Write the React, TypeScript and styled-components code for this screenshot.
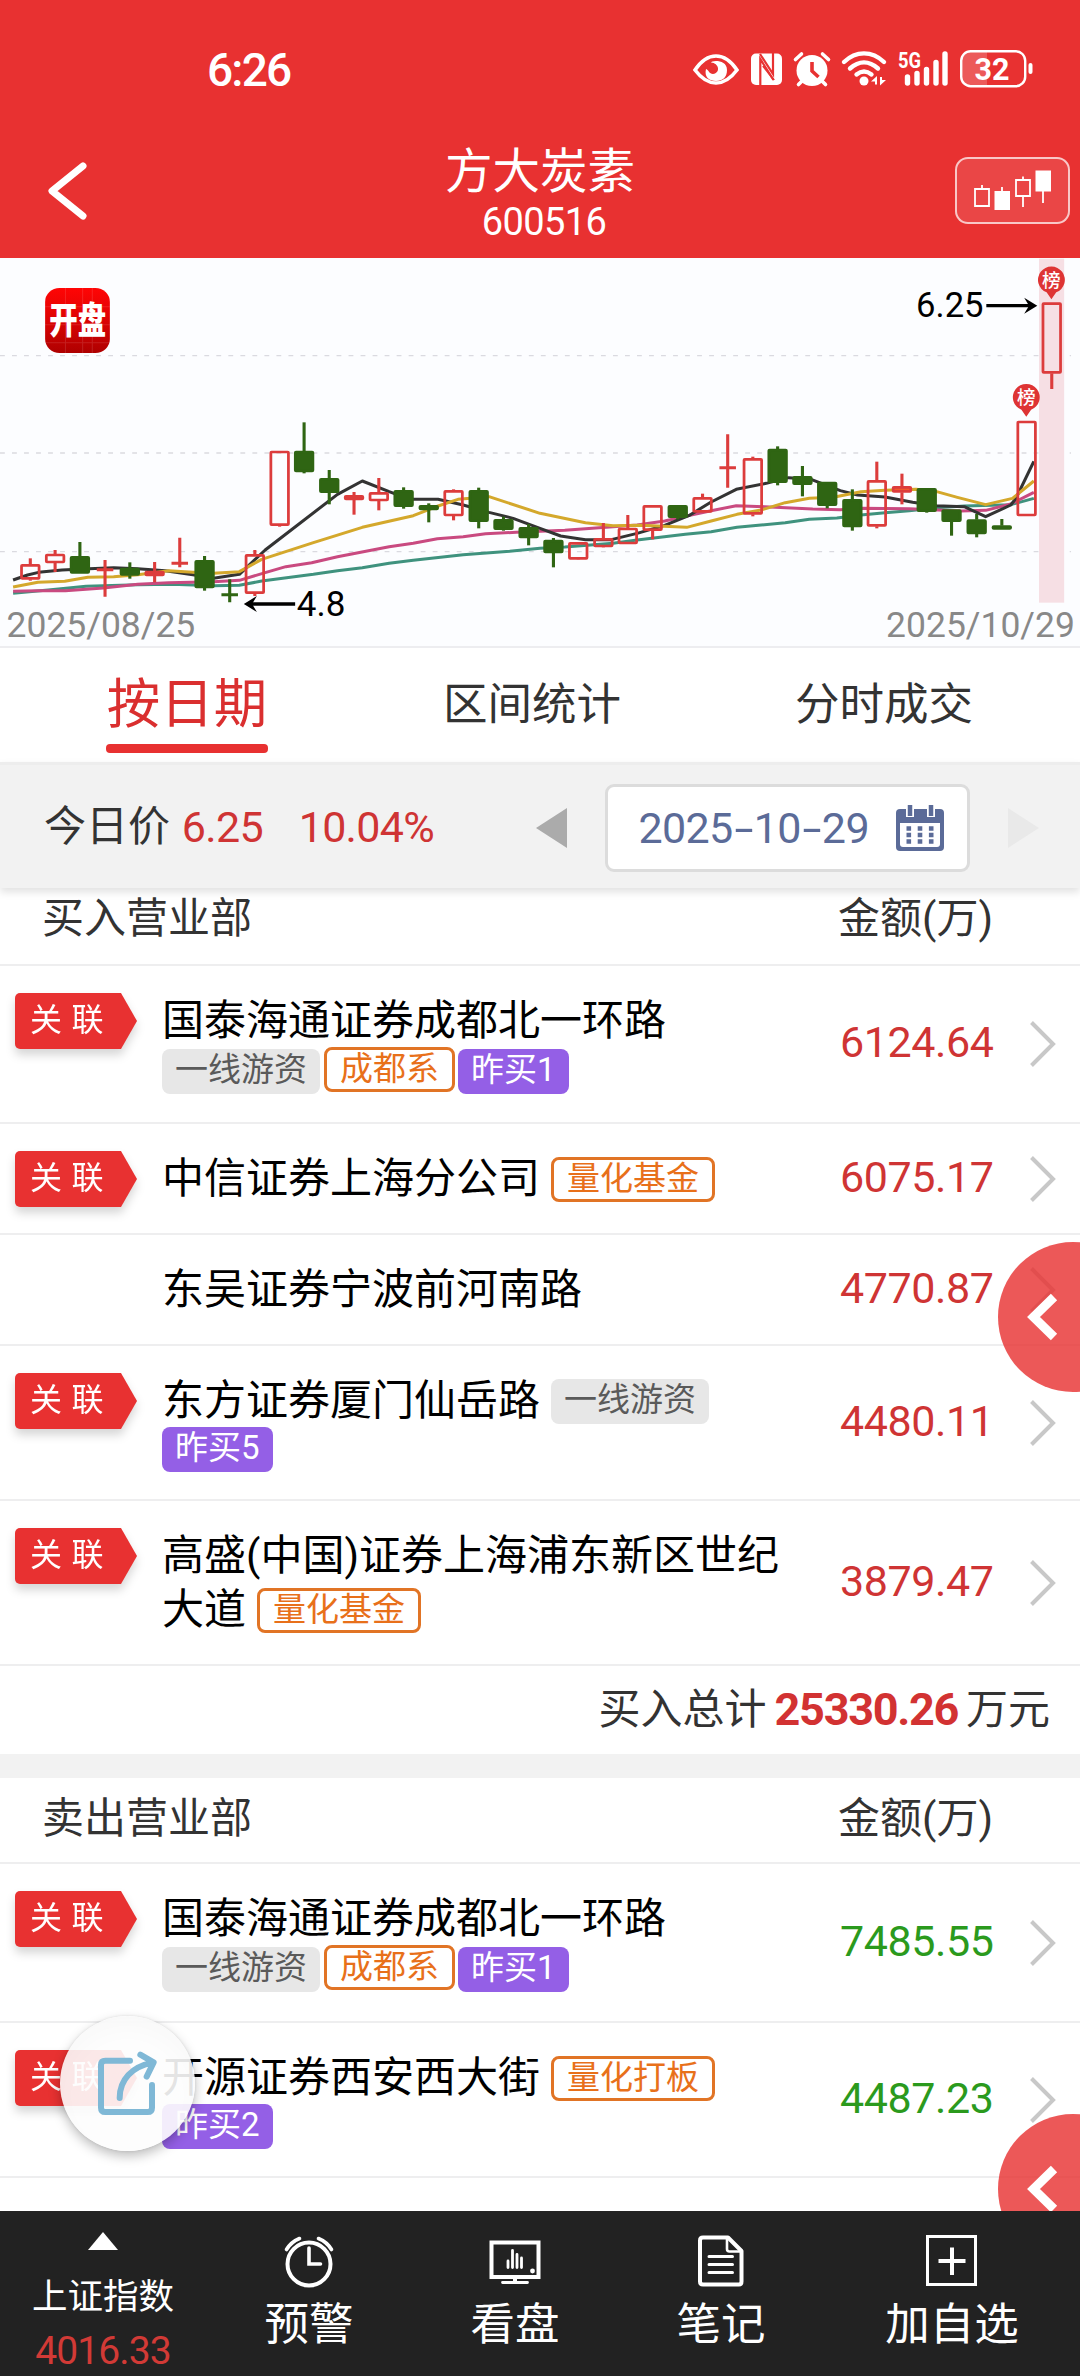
import React from "react";
import styled, { createGlobalStyle, css } from "styled-components";

const FONT = `Roboto, "Noto Sans CJK SC", sans-serif`;

const GlobalStyle = createGlobalStyle`
  html, body { margin: 0; padding: 0; background: #fff; }
  * { box-sizing: border-box; }
`;

const Screen = styled.div`
  position: relative;
  width: 1080px;
  height: 2376px;
  overflow: hidden;
  display: flex;
  flex-direction: column;
  background: #fff;
  font-family: ${FONT};
  color: #333;
`;

/* ---------- header ---------- */

const Header = styled.header`
  height: 258px;
  flex: none;
  background: #e83131;
  color: #fff;
`;

const StatusBar = styled.div`
  height: 138px;
  display: flex;
  align-items: center;
  justify-content: space-between;
  padding: 1px 45px 0 207px;

  svg { margin-top: -3px; }
`;

const Clock = styled.span`
  font-size: 46px;
  font-weight: 500;
  line-height: 50px;
  letter-spacing: -1.8px;
`;

const NavBar = styled.div`
  height: 120px;
  display: flex;
  align-items: flex-start;
  justify-content: space-between;
`;

const NavSide = styled.div<{ $end?: boolean }>`
  width: 300px;
  height: 120px;
  display: flex;
  align-items: flex-start;
  justify-content: ${(p) => (p.$end ? "flex-end" : "flex-start")};
  padding: ${(p) => (p.$end ? "19px 10px 0 0" : "22px 0 0 44px")};
`;

const Heading = styled.div`
  display: flex;
  flex-direction: column;
  align-items: center;
  padding-top: 6px;
`;

const StockName = styled.h1`
  margin: 0;
  font-size: 47.5px;
  font-weight: 400;
  line-height: 56px;
`;

const StockCode = styled.div`
  font-size: 38px;
  line-height: 45px;
  letter-spacing: -0.6px;
  padding-left: 8px;
`;

const KlineButton = styled.button`
  width: 115px;
  height: 67px;
  padding: 0;
  border: 2px solid rgba(255, 255, 255, 0.7);
  border-radius: 13px;
  background: rgba(255, 255, 255, 0.1);
  display: flex;
`;

/* ---------- chart ---------- */

const ChartPanel = styled.section`
  height: 390px;
  flex: none;
  background: #fcfdff;
  border-bottom: 2px solid #ededf0;
`;

/* ---------- tabs ---------- */

const Tabs = styled.nav`
  height: 114px;
  flex: none;
  display: flex;
  gap: 176px;
  padding-left: 106px;
`;

const Tab = styled.div<{ $active?: boolean }>`
  position: relative;
  height: 105px;
  width: ${(p) => (p.$active ? 162 : 176)}px;
  display: flex;
  justify-content: center;
  font-size: ${(p) => (p.$active ? 53.5 : 44.5)}px;
  line-height: 114px;
  white-space: nowrap;
  color: ${(p) => (p.$active ? "#da2f2f" : "#333")};
  ${(p) =>
    p.$active &&
    css`
      &::after {
        content: "";
        position: absolute;
        left: 0;
        right: 0;
        bottom: 0;
        height: 9px;
        border-radius: 4px;
        background: #e83131;
      }
    `}
`;

/* ---------- price / date bar ---------- */

const PriceBar = styled.div`
  height: 126px;
  flex: none;
  z-index: 1;
  display: flex;
  align-items: center;
  padding: 0 40px 0 44px;
  background: #f2f2f2;
  border-top: 3px solid #ededed;
  box-shadow: 0 4px 8px rgba(0, 0, 0, 0.12);
`;

const PriceLabel = styled.span`
  font-size: 42px;
  line-height: 60px;
  width: 138px;
`;

const PriceValue = styled.span<{ $w: number }>`
  width: ${(p) => p.$w}px;
  font-size: 43px;
  line-height: 60px;
  letter-spacing: -0.7px;
  color: #cf3434;
`;

const Arrow = styled.svg`
  width: 32px;
  height: 42px;
  margin-top: 3px;
  flex: none;
`;

const DateBox = styled.div`
  width: 365px;
  height: 88px;
  margin: 2px 38px 0 37px;
  border: 3px solid #dcdcdc;
  border-radius: 9px;
  background: #fff;
  display: flex;
  align-items: center;
  justify-content: space-between;
  padding: 0 23px 0 30px;
`;

const DateText = styled.span`
  font-size: 43px;
  line-height: 60px;
  letter-spacing: -0.6px;
  color: #5b6b98;
  white-space: nowrap;
`;

const Dash = styled.span`
  display: inline-block;
  width: 21px;
  text-align: center;
  transform: scaleX(1.6);
`;

/* ---------- lists ---------- */

const ListHead = styled.div<{ $h: number; $pt: number }>`
  height: ${(p) => p.$h}px;
  padding: ${(p) => p.$pt}px 87px 0 42px;
  flex: none;
  display: flex;
  justify-content: space-between;
  font-size: 42px;
  line-height: 60px;
  border-bottom: 2px solid #eeeeef;
`;

const RowBox = styled.div<{ $h: number }>`
  height: ${(p) => p.$h}px;
  flex: none;
  display: flex;
  border-bottom: 2px solid #eeeeef;
`;

const BadgeCell = styled.div`
  width: 162px;
  padding: 27px 0 0 15px;
`;

const Badge = styled.div`
  width: 122px;
  height: 56px;
  filter: drop-shadow(0 6px 5px rgba(0, 0, 0, 0.16));
`;

const BadgeShape = styled.div`
  width: 122px;
  height: 56px;
  padding-left: 15px;
  border-radius: 5px 0 0 5px;
  background: #e83131;
  clip-path: polygon(0 0, 106px 0, 122px 28px, 106px 56px, 0 56px);
  color: #fff;
  font-size: 32px;
  line-height: 54px;
  white-space: pre;
  word-spacing: 1.5px;
`;

const NameCell = styled.div`
  width: 678px;
  padding-top: 28px;
`;

const NameLine = styled.div<{ $lineHeight: number }>`
  height: ${(p) => p.$lineHeight}px;
  display: flex;
  align-items: center;
  font-size: 42px;
  line-height: 54px;
  color: #000;
  white-space: nowrap;
`;

type TagKind = "gray" | "orange" | "purple";

const Tag = styled.span<{ $kind: TagKind; $ml: number; $up?: boolean }>`
  height: 45px;
  margin-left: ${(p) => p.$ml}px;
  padding: 0 13px;
  border-radius: 8px;
  font-size: 33px;
  line-height: 42px;
  ${(p) =>
    p.$kind === "gray" && css`background: #e7e7e7; color: #5a5a5a;`}
  ${(p) =>
    p.$kind === "purple" && css`background: #945fe6; color: #fff;`}
  ${(p) =>
    p.$kind === "orange" &&
    css`border: 3px solid #e17425; color: #e8701a; background: #fff; line-height: 38px;`}
  ${(p) => p.$up && css`margin-top: -4px;`}
`;

const Amount = styled.div<{ $sell?: boolean }>`
  width: 190px;
  display: flex;
  align-items: center;
  padding-bottom: 4px;
  font-size: 43px;
  letter-spacing: -0.4px;
  color: ${(p) => (p.$sell ? "#2b9a1d" : "#cf3434")};
`;

const ChevronCell = styled.svg`
  align-self: center;
  width: 26px;
  height: 46px;
`;

const TotalRow = styled.div`
  height: 88px;
  flex: none;
  display: flex;
  justify-content: flex-end;
  align-items: center;
  gap: 8px;
  padding: 0 30px 0 0;
  font-size: 42px;
  line-height: 60px;
`;

const TotalValue = styled.b`
  font-size: 45px;
  font-weight: 700;
  letter-spacing: -1.3px;
  color: #d23232;
`;

const Separator = styled.div`
  height: 24px;
  flex: none;
  background: #f2f2f2;
`;

/* ---------- floating controls ---------- */

const SideHandle = styled.button<{ $top: number }>`
  position: absolute;
  left: 998px;
  top: ${(p) => p.$top}px;
  width: 150px;
  height: 150px;
  padding: 0;
  border: 0;
  border-radius: 50%;
  background: rgba(232, 49, 49, 0.81);
  display: flex;
`;

const ShareButton = styled.button`
  position: absolute;
  left: 60px;
  top: 2016px;
  width: 135px;
  height: 135px;
  padding: 0;
  border: 0;
  border-radius: 50%;
  background: rgba(253, 253, 253, 0.9);
  box-shadow: 0 5px 12px rgba(0, 0, 0, 0.26), 0 0 3px rgba(0, 0, 0, 0.1),
    inset 0 12px 24px rgba(0, 0, 0, 0.02);
  display: flex;
`;

/* ---------- bottom bar ---------- */

const BottomSlot = styled.div`
  flex: 1;
`;

const BottomBar = styled.footer`
  height: 165px;
  flex: none;
  z-index: 2;
  display: flex;
  background: #222;
  color: #fff;
`;

const BottomItem = styled.div<{ $w: number }>`
  width: ${(p) => p.$w}px;
  display: flex;
  flex-direction: column;
  align-items: center;
  padding-top: 22px;
  font-size: 44.5px;
  line-height: 60px;
  svg { width: 56px; height: 56px; margin-bottom: 6px; }
`;

const IndexItem = styled(BottomItem)`
  padding-top: 20px;
  font-size: 35.5px;
  line-height: 50px;
  svg { width: 30px; height: 20px; margin-bottom: 21px; }
`;

const IndexValue = styled.span`
  font-size: 39px;
  line-height: 50px;
  margin-top: 4px;
  letter-spacing: -0.9px;
  color: #d23a36;
`;

/* ---------- data ---------- */

interface Candle {
  x: number;
  o: number;
  c: number;
  hi: number;
  lo: number;
  up?: boolean;
  fill?: string;
}

const R = (x: number, o: number, c: number, hi: number, lo: number, fill?: string): Candle => ({ x, o, c, hi, lo, up: true, fill });
const G = (x: number, o: number, c: number, hi: number, lo: number): Candle => ({ x, o, c, hi, lo });

const CANDLES: Candle[] = [
  R(88, 943, 988, 925, 992),
  R(160, 912, 939, 900, 966),
  G(232, 919, 970, 876, 970),
  R(305, 959, 959, 930, 1040),
  G(377, 954, 976, 937, 986),
  R(449, 963, 978, 936, 997, "#e03a3a"),
  R(522, 940, 940, 863, 952),
  G(594, 931, 1014, 918, 1022),
  G(667, 1034, 1034, 988, 1057),
  R(740, 913, 1031, 900, 1038),
  R(812, 603, 827, 603, 830),
  G(883, 603, 666, 517, 670),
  G(956, 685, 728, 660, 763),
  R(1028, 736, 750, 726, 794, "#e03a3a"),
  R(1100, 727, 753, 684, 781),
  G(1172, 721, 770, 712, 776),
  G(1245, 766, 780, 760, 817),
  R(1317, 721, 798, 718, 811),
  G(1390, 721, 815, 713, 835),
  G(1462, 808, 839, 800, 842),
  G(1535, 832, 864, 822, 886),
  G(1607, 870, 909, 864, 952),
  R(1679, 877, 928, 877, 929),
  R(1752, 865, 891, 819, 892),
  R(1823, 834, 882, 795, 880),
  R(1895, 766, 842, 766, 868),
  G(1968, 766, 803, 766, 808),
  R(2040, 742, 787, 731, 787),
  R(2113, 653, 653, 553, 713),
  R(2186, 625, 793, 620, 799),
  G(2258, 597, 698, 589, 706),
  G(2330, 679, 704, 648, 739),
  G(2402, 696, 767, 696, 775),
  G(2475, 748, 831, 718, 842),
  R(2546, 691, 829, 635, 835),
  R(2619, 709, 727, 671, 763, "#f0592c"),
  G(2691, 715, 785, 715, 788),
  G(2763, 779, 815, 779, 857),
  G(2836, 809, 852, 792, 862),
  G(2909, 827, 838, 807, 838),
  R(2981, 513, 798, 513, 798),
  R(3054, 158, 370, 158, 417),
];

const MA_LINES: { color: string; points: string }[] = [
  {
    color: "#3f927e",
    points:
      "38,1030 140,1020 250,1009 400,1004 500,1003 620,1007 695,1006 760,993 910,973 980,962 1052,953 1130,940 1200,931 1345,914 1480,904 1568,895 1640,891 1780,880 1850,870 1990,853 2065,845 2140,832 2210,825 2280,818 2350,808 2430,804 2500,795 2570,788 2640,782 2720,773 2800,768 2935,764 3002,745",
  },
  {
    color: "#c94a80",
    points:
      "38,1024 110,1022 190,1022 300,1014 400,1003 490,998 620,995 695,991 770,968 830,950 905,938 980,920 1130,890 1200,880 1270,866 1345,860 1410,851 1500,847 1640,841 1700,836 1850,825 1930,813 2010,794 2065,782 2138,767 2220,770 2360,777 2440,779 2500,775 2640,776 2790,783 2862,781 2935,762 3002,727",
  },
  {
    color: "#333333",
    points:
      "38,990 80,975 112,967 180,960 240,957 330,953 400,956 480,962 560,974 620,985 695,973 770,900 980,733 1052,693 1130,725 1190,748 1272,748 1345,765 1420,787 1490,805 1568,835 1628,858 1700,869 1775,869 1850,850 1930,826 2000,797 2065,756 2138,718 2225,700 2290,683 2355,688 2440,722 2490,735 2570,741 2650,757 2720,767 2800,770 2862,800 2935,765 2950,745 3002,634",
  },
  {
    color: "#d4a82c",
    points:
      "38,1011 110,997 188,994 255,982 330,980 400,974 490,962 560,967 620,970 695,965 760,928 910,878 1052,832 1200,797 1272,768 1330,748 1420,740 1568,790 1700,818 1780,827 1860,826 1994,832 2065,813 2140,793 2210,780 2280,758 2350,745 2420,742 2500,725 2570,721 2660,718 2720,725 2780,742 2862,764 2940,745 3002,693",
  },
];

interface TagData {
  kind: TagKind;
  text: string;
}
interface LineData {
  text?: string;
  tags?: TagData[];
}
interface RowData {
  h: number;
  linked: boolean;
  amount: string;
  lines: LineData[];
}

const t = (kind: TagKind, text: string): TagData => ({ kind, text });

const BUY: RowData[] = [
  {
    h: 158,
    linked: true,
    amount: "6124.64",
    lines: [
      { text: "国泰海通证券成都北一环路" },
      { tags: [t("gray", "一线游资"), t("orange", "成都系"), t("purple", "昨买1")] },
    ],
  },
  { h: 111, linked: true, amount: "6075.17", lines: [{ text: "中信证券上海分公司", tags: [t("orange", "量化基金")] }] },
  { h: 111, linked: false, amount: "4770.87", lines: [{ text: "东吴证券宁波前河南路" }] },
  {
    h: 155,
    linked: true,
    amount: "4480.11",
    lines: [
      { text: "东方证券厦门仙岳路", tags: [t("gray", "一线游资")] },
      { tags: [t("purple", "昨买5")] },
    ],
  },
  {
    h: 165,
    linked: true,
    amount: "3879.47",
    lines: [{ text: "高盛(中国)证券上海浦东新区世纪" }, { text: "大道", tags: [t("orange", "量化基金")] }],
  },
];

const SELL: RowData[] = [
  {
    h: 159,
    linked: true,
    amount: "7485.55",
    lines: [
      { text: "国泰海通证券成都北一环路" },
      { tags: [t("gray", "一线游资"), t("orange", "成都系"), t("purple", "昨买1")] },
    ],
  },
  {
    h: 155,
    linked: true,
    amount: "4487.23",
    lines: [
      { text: "开源证券西安西大街", tags: [t("orange", "量化打板")] },
      { tags: [t("purple", "昨买2")] },
    ],
  },
];

/* ---------- parts ---------- */

const StatusIcons = () => (
  <svg width="345" height="44" viewBox="690 46 345 44" fill="none" stroke="#fff">
    <path d="M695 70C701 61 708 56 716 56S731 61 737 70C731 78 724 83 716 83S701 78 695 70Z" strokeWidth="3.6" />
    <path d="M711 62.500C719 63 721 73 713 74C709 74 709 70 706 69C704 77 709 81 716 81S727 77 727 70S721 61 716 61C713 61 711 62 711 62.500Z" fill="#fff" stroke="none" />
    <rect x="751" y="53.500" width="31" height="31.500" rx="5" fill="#fff" stroke="none" />
    <path d="M760.300 86V59L773.500 80" stroke="#e83131" strokeWidth="2.200" />
    <path d="M760 54L773 74V53" stroke="#e83131" strokeWidth="2.200" />
    <path d="M763 66L774 80" stroke="#e83131" strokeWidth="2" />
    <circle cx="812" cy="70.500" r="15.500" fill="#fff" stroke="none" />
    <path d="M795.500 59.500L801.500 54M828.500 59.500L822.500 54M802 81L798.500 84.500M822 81L825.500 84.500" strokeWidth="3.600" strokeLinecap="round" />
    <path d="M812 62V71L818.500 77" stroke="#e83131" strokeWidth="3.600" />
    <path d="M844 62C856 50.500 872 50.500 884 62M850 68.500C859 60.500 869 60.500 878 68.500M856.500 74.500C861.500 70.500 866.500 70.500 871.500 74.500" strokeWidth="4.400" strokeLinecap="round" />
    <circle cx="864" cy="81" r="4.500" fill="#fff" stroke="none" />
    <path d="M871 81.500L877 76V84.500H875V81.500ZM886 80L880 85.500V77H882V80Z" fill="#fff" stroke="none" />
    <path d="M907.500 77V83M917 73.500V83M926.500 69.500V83M936 62.500V83M945 54V83" strokeWidth="5.400" strokeLinecap="round" />
    <text x="898" y="67.500" fill="#fff" stroke="none" fontFamily={FONT} fontWeight="700" fontSize="21.500" textLength="23" lengthAdjust="spacingAndGlyphs">5G</text>
    <path d="M987 52H971Q962 52 962 61V76Q962 85 971 85H987Z" fill="#fff" fillOpacity="0.2" stroke="none" />
    <rect x="961.200" y="51.200" width="64" height="35" rx="9.500" strokeWidth="2.400" />
    <path d="M1030.500 65V72" strokeWidth="4" strokeLinecap="round" />
    <text x="974.500" y="80" fill="#fff" stroke="none" fontFamily={FONT} fontWeight="700" fontSize="32" textLength="35" lengthAdjust="spacingAndGlyphs">32</text>
  </svg>
);

const KlineIcon = () => (
  <svg width="111" height="63" viewBox="957 159 111 63" fill="none" stroke="#fff" strokeWidth="1.800">
    <path d="M975 189H989V206H975ZM982 185V189M1016 180H1030V196H1016ZM1023 176.500V180M1023 196V207M1002 187V192M1043 191V203" />
    <path d="M994.500 191H1010V210H994.500ZM1035.500 170.500H1051V191.500H1035.500Z" fill="#fff" stroke="none" />
  </svg>
);

const Pin = ({ x, y }: { x: number; y: number }) => (
  <g>
    <path
      d={`M${x} ${y + 57}L${x - 14} ${y + 36}A39 40 0 1 1 ${x + 14} ${y + 36}Z`}
      fill="#de3434"
    />
    <text x={x} y={y + 20} textAnchor="middle" fontSize="54" fontWeight="500" fill="#fff" fontFamily={FONT}>榜</text>
  </g>
);

const CandleMark = ({ k }: { k: Candle }) => {
  const color = k.up ? "#dc3c3c" : "#2f6513";
  if (k.o === k.c) {
    return (
      <path d={`M${k.x - 24} ${k.o}H${k.x + 24}M${k.x} ${k.hi}V${k.lo}`} stroke={color} strokeWidth="9" />
    );
  }
  return (
    <g stroke={color} strokeWidth="9">
      {k.hi < k.o && <path d={`M${k.x} ${k.hi}V${k.o}`} />}
      {k.lo > k.c && <path d={`M${k.x} ${k.c}V${k.lo}`} />}
      <rect
        x={k.x - 25.5}
        y={k.o + 3}
        width="51"
        height={Math.max(k.c - k.o - 6, 3)}
        rx="2"
        strokeLinejoin="round"
        strokeWidth="8"
        fill={k.up ? k.fill ?? "none" : color}
      />
    </g>
  );
};

const Chart = () => (
  <svg width="1080" height="390" viewBox="0 24 3136 1170" preserveAspectRatio="none" fill="none" display="block">
    <defs>
      <linearGradient id="logo" x1="0" y1="0" x2="0" y2="1">
        <stop offset="0" stopColor="#ff0505" />
        <stop offset="0.4" stopColor="#e40404" />
        <stop offset="1" stopColor="#ae0000" />
      </linearGradient>
    </defs>
    {[317, 609, 905].map((y) => (
      <path key={y} d={`M0 ${y}H3110`} stroke="#dadae0" strokeWidth="4" strokeDasharray="14 20.900" />
    ))}
    <rect x="3017" y="26" width="73" height="1032" fill="#f6dfe4" />
    {MA_LINES.map((l) => (
      <polyline key={l.color} points={l.points} stroke={l.color} strokeWidth="9" strokeLinejoin="round" />
    ))}
    {CANDLES.map((k) => (
      <CandleMark key={k.x} k={k} />
    ))}
    <Pin x={2980} y={443} />
    <Pin x={3053} y={91} />
    <path d="M857 1062H722" stroke="#000" strokeWidth="10" />
    <path d="M708 1062L746 1038L732 1062L746 1086Z" fill="#000" />
    <path d="M2864 167H3000" stroke="#000" strokeWidth="10" />
    <path d="M3012 167L2974 143L2988 167L2974 191Z" fill="#000" />
    <g fill="#000" fontFamily={FONT} fontSize="106">
      <text x="862" y="1097" textLength="141" lengthAdjust="spacingAndGlyphs">4.8</text>
      <text x="2660" y="201" textLength="196" lengthAdjust="spacingAndGlyphs">6.25</text>
    </g>
    <g fill="#888" fontFamily={FONT} fontSize="106">
      <text x="19" y="1162" textLength="548" lengthAdjust="spacingAndGlyphs">2025/08/25</text>
      <text x="2573" y="1162" textLength="548" lengthAdjust="spacingAndGlyphs">2025/10/29</text>
    </g>
    <rect x="131" y="114" width="188" height="195" rx="42" fill="url(#logo)" />
    <path d="M131 170H319M131 224H319M131 278H319M190 114V309M240 114V309M268 114V309" stroke="#fff" strokeOpacity="0.12" strokeWidth="3" />
    <text x="143" y="253" fill="#fff" fontFamily={FONT} fontWeight="900" fontSize="112" textLength="165" lengthAdjust="spacingAndGlyphs">开盘</text>
  </svg>
);

const CalendarIcon = () => (
  <svg width="48" height="46" viewBox="0 0 48 46">
    <rect x="0" y="4" width="48" height="42" rx="4" fill="#5b6b98" />
    <path d="M4 18H44V39Q44 42 41 42H7Q4 42 4 39Z" fill="#fff" />
    <path d="M14 0V12M35 0V12" stroke="#fff" strokeWidth="8" />
    <path d="M14 0V11M35 0V11" stroke="#5b6b98" strokeWidth="4.500" />
    <path d="M10.500 23.500H39M10.500 30H39M10.500 36.500H39" stroke="#5b6b98" strokeWidth="4.400" strokeDasharray="4.600 6.600" />
  </svg>
);

const Row = ({ row, sell }: { row: RowData; sell?: boolean }) => (
  <RowBox $h={row.h}>
    <BadgeCell>
      {row.linked && (
        <Badge>
          <BadgeShape>关 联</BadgeShape>
        </Badge>
      )}
    </BadgeCell>
    <NameCell>
      {row.lines.map((line, i) => {
        const multi = (line.tags?.length ?? 0) > 1;
        const lineHeight = line.text ? 54 : multi ? 46 : 42;
        return (
          <NameLine key={i} $lineHeight={lineHeight}>
            {line.text}
            {line.tags?.map((tag, j) => (
              <Tag
                key={tag.text}
                $kind={tag.kind}
                $ml={line.text ? 11 : j === 0 ? 0 : j === 1 ? 4 : 3}
                $up={multi && tag.kind === "orange"}
              >
                {tag.text}
              </Tag>
            ))}
          </NameLine>
        );
      })}
    </NameCell>
    <Amount $sell={sell}>{row.amount}</Amount>
    <ChevronCell viewBox="0 0 26 46" fill="none" stroke="#c8c8c8" strokeWidth="4">
      <path d="M1.500 1.500L23 23L1.500 44.500" />
    </ChevronCell>
  </RowBox>
);

const HandleIcon = () => (
  <svg width="82" height="150" viewBox="0 0 82 150" fill="none" stroke="#fff" strokeWidth="9">
    <path d="M56 55L35.500 75L56 95" />
  </svg>
);

const ShareIcon = () => (
  <svg width="135" height="135" viewBox="30 48 405 405" fill="none" stroke="#7fb8d6" strokeWidth="18" strokeLinecap="round" strokeLinejoin="round">
    <path d="M240 182H166Q153 182 153 195V323Q153 336 166 336H293Q306 336 306 323V255" />
    <path d="M209 294C209 240 245 200 308 188M271 164L311 187L290 230" />
  </svg>
);

const AlarmIcon = () => (
  <svg viewBox="0 0 56 56" fill="none" stroke="#fff" strokeWidth="4" strokeLinecap="round">
    <circle cx="28" cy="31" r="21.500" />
    <path d="M28 15V31H39.500" strokeWidth="3.600" />
    <path d="M5.500 16.500Q10 9 18.500 5.500M50.500 16.500Q46 9 37.500 5.500" strokeWidth="3.600" />
  </svg>
);

const MonitorIcon = () => (
  <svg viewBox="0 0 56 56" fill="none" stroke="#fff">
    <rect x="4.500" y="9.500" width="47" height="34.500" strokeWidth="4" />
    <path d="M28 44V49" strokeWidth="4" />
    <path d="M15.500 49.500H40.500M21 28V34.500M25.500 17.500V34.500M30 21.500V34.500M34.500 25V34.500" strokeWidth="2.800" strokeLinecap="round" />
    <circle cx="45.500" cy="38" r="2.400" fill="#fff" stroke="none" />
  </svg>
);

const NoteIcon = () => (
  <svg viewBox="0 0 56 56" fill="none" stroke="#fff" strokeWidth="4" strokeLinejoin="round">
    <path d="M35 4.500H10Q7 4.500 7 7.500V48.500Q7 51.500 10 51.500H46Q48.500 51.500 48.500 48.500V18Z" />
    <path d="M34 5V16Q34 18.500 36.500 18.500H48" strokeWidth="2.600" />
    <path d="M16 23.500H39.500M16 31.500H39.500M16 39.500H39.500" strokeWidth="3" strokeLinecap="round" />
  </svg>
);

const AddIcon = () => (
  <svg viewBox="0 0 56 56" fill="none" stroke="#fff">
    <rect x="3.500" y="3.500" width="48" height="48" strokeWidth="3" />
    <path d="M28 14.500V42M14.500 28H41.500" strokeWidth="4" />
  </svg>
);

export default function App() {
  return (
    <>
      <GlobalStyle />
      <Screen>
        <Header>
          <StatusBar>
            <Clock>6:26</Clock>
            <StatusIcons />
          </StatusBar>
          <NavBar>
            <NavSide>
              <svg width="46" height="62" viewBox="0 0 46 62" fill="none" stroke="#fff" strokeWidth="7" strokeLinecap="round" strokeLinejoin="round">
                <path d="M39 6L8 31L39 56" />
              </svg>
            </NavSide>
            <Heading>
              <StockName>方大炭素</StockName>
              <StockCode>600516</StockCode>
            </Heading>
            <NavSide $end>
              <KlineButton aria-label="K线">
                <KlineIcon />
              </KlineButton>
            </NavSide>
          </NavBar>
        </Header>

        <ChartPanel>
          <Chart />
        </ChartPanel>

        <Tabs>
          <Tab $active>按日期</Tab>
          <Tab>区间统计</Tab>
          <Tab>分时成交</Tab>
        </Tabs>

        <PriceBar>
          <PriceLabel>今日价</PriceLabel>
          <PriceValue $w={117}>6.25</PriceValue>
          <PriceValue $w={238}>10.04%</PriceValue>
          <Arrow viewBox="0 0 32 42">
            <path d="M31 1V41L0 21Z" fill="#ababab" />
          </Arrow>
          <DateBox>
            <DateText>
              2025<Dash>-</Dash>10<Dash>-</Dash>29
            </DateText>
            <CalendarIcon />
          </DateBox>
          <Arrow viewBox="0 0 32 42">
            <path d="M0 1V41L31 21Z" fill="#e9e9e9" />
          </Arrow>
        </PriceBar>

        <ListHead $h={78} $pt={1}>
          <span>买入营业部</span>
          <span>金额(万)</span>
        </ListHead>
        {BUY.map((r) => (
          <Row key={r.amount} row={r} />
        ))}
        <TotalRow>
          <span>买入总计</span>
          <TotalValue>25330.26</TotalValue>
          <span>万元</span>
        </TotalRow>
        <Separator />
        <ListHead $h={86} $pt={11}>
          <span>卖出营业部</span>
          <span>金额(万)</span>
        </ListHead>
        {SELL.map((r) => (
          <Row key={r.amount} row={r} sell />
        ))}
        <BottomSlot />

        <SideHandle $top={1242} aria-label="展开">
          <HandleIcon />
        </SideHandle>
        <SideHandle $top={2114} aria-label="展开">
          <HandleIcon />
        </SideHandle>
        <ShareButton aria-label="分享">
          <ShareIcon />
        </ShareButton>

        <BottomBar>
          <IndexItem $w={206}>
            <svg viewBox="0 0 30 20">
              <path d="M15 1L30 19H0Z" fill="#fff" />
            </svg>
            <span>上证指数</span>
            <IndexValue>4016.33</IndexValue>
          </IndexItem>
          <BottomItem $w={206}>
            <AlarmIcon />
            <span>预警</span>
          </BottomItem>
          <BottomItem $w={206}>
            <MonitorIcon />
            <span>看盘</span>
          </BottomItem>
          <BottomItem $w={206}>
            <NoteIcon />
            <span>笔记</span>
          </BottomItem>
          <BottomItem $w={256}>
            <AddIcon />
            <span>加自选</span>
          </BottomItem>
        </BottomBar>
      </Screen>
    </>
  );
}
